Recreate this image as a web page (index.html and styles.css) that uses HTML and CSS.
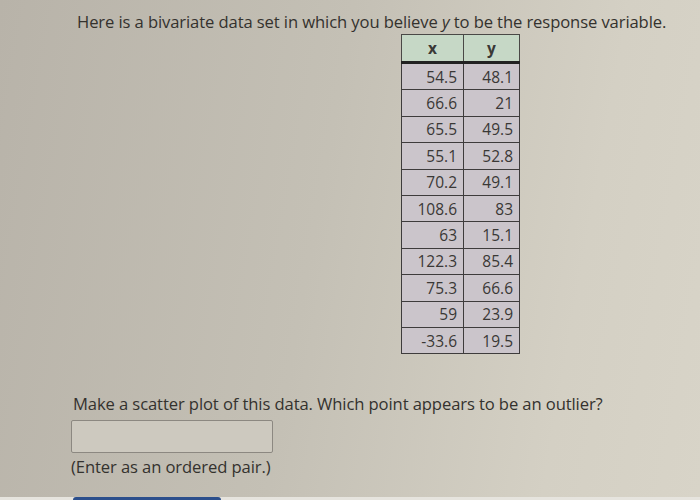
FILE: index.html
```html
<!DOCTYPE html>
<html>
<head>
<meta charset="utf-8">
<link rel="stylesheet" href="styles.css">
</head>
<body>
<div class="page">
  <p class="intro">Here is a bivariate data set in which you believe <i>y</i> to be the response variable.</p>
  <table class="data">
    <thead><tr><th>x</th><th>y</th></tr></thead>
    <tbody>
      <tr><td>54.5</td><td>48.1</td></tr>
      <tr><td>66.6</td><td>21</td></tr>
      <tr><td>65.5</td><td>49.5</td></tr>
      <tr><td>55.1</td><td>52.8</td></tr>
      <tr><td>70.2</td><td>49.1</td></tr>
      <tr><td>108.6</td><td>83</td></tr>
      <tr><td>63</td><td>15.1</td></tr>
      <tr><td>122.3</td><td>85.4</td></tr>
      <tr><td>75.3</td><td>66.6</td></tr>
      <tr><td>59</td><td>23.9</td></tr>
      <tr><td>-33.6</td><td>19.5</td></tr>
    </tbody>
  </table>
  <p class="question">Make a scatter plot of this data. Which point appears to be an outlier?</p>
  <div class="answer"></div>
  <p class="hint">(Enter as an ordered pair.)</p>
  <div class="bottom"><div class="btn"></div></div>
</div>
</body>
</html>
```

FILE: styles.css
```css
html, body {
  margin: 0;
  padding: 0;
}
body {
  width: 700px;
  height: 500px;
  overflow: hidden;
  font-family: "Open Sans", "Liberation Sans", sans-serif;
  color: #34322e;
  background: linear-gradient(100deg, #b8b3a9 0%, #c4c0b5 45%, #d4d0c4 80%, #d8d4c8 100%);
}
.page {
  display: flex;
  flex-direction: column;
  align-items: flex-start;
  height: 500px;
}
.intro {
  margin: 10px 0 0 77px;
  font-size: 16.6px;
  font-weight: 500;
  letter-spacing: -0.1px;
  line-height: 24px;
  white-space: nowrap;
}
.intro i {
  font-style: italic;
}
.data {
  margin: 0 0 0 401px;
  border-collapse: collapse;
  font-size: 15.5px;
  font-weight: 500;
  color: #3a3836;
}
.data th {
  background: #c6d8c6;
  font-weight: 700;
  height: 26px;
  padding: 0;
  border: 1px solid #4a4846;
  border-bottom: 3px solid #222;
  text-align: center;
}
.data th:first-child { width: 61px; }
.data th:last-child { width: 55px; }
.data td {
  background: #cbc5cb;
  border: 1px solid #3e3c3c;
  height: 25.4px;
  padding: 0 6px 0 0;
  text-align: right;
  line-height: 20px;
}
.question {
  margin: 39px 0 0 73px;
  font-size: 16.6px;
  font-weight: 500;
  letter-spacing: -0.1px;
  line-height: 22px;
  white-space: nowrap;
}
.answer {
  margin: 5px 0 0 71px;
  width: 200px;
  height: 31px;
  border: 1px solid #8c8881;
  border-radius: 2px;
  background: #cdc9bf;
}
.hint {
  margin: 2px 0 0 71px;
  font-size: 16.6px;
  font-weight: 500;
  line-height: 24px;
  letter-spacing: -0.1px;
  white-space: nowrap;
}
.bottom {
  margin-top: auto;
  align-self: stretch;
  height: 3px;
  background: #e6e4de;
  display: flex;
}
.btn {
  margin-left: 73px;
  width: 148px;
  background: #2c4f8c;
  border-radius: 3px 3px 0 0;
}
```
